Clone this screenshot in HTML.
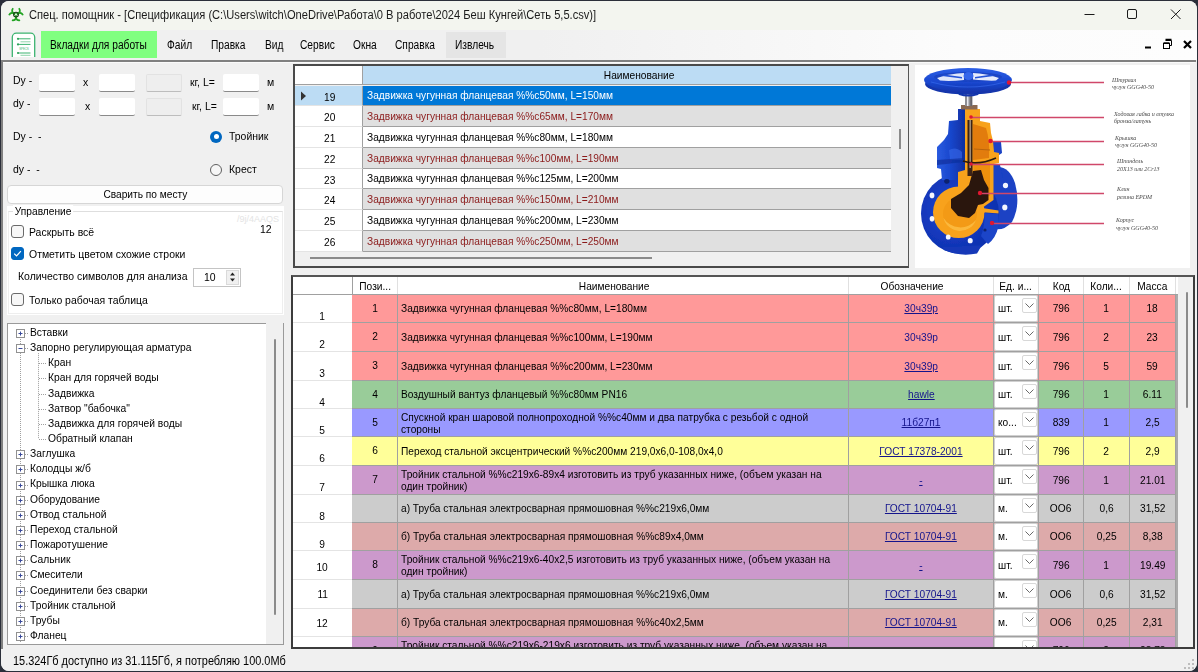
<!DOCTYPE html><html lang="ru"><head><meta charset="utf-8"><title>Спец. помощник</title><style>
*{box-sizing:border-box;margin:0;padding:0}
html,body{width:1198px;height:672px;overflow:hidden;background:#2b2f3a}
body{font-family:"Liberation Sans",sans-serif;font-size:11px;color:#000;position:relative}
.a{position:absolute;white-space:nowrap}
#win{left:1px;top:1px;width:1196px;height:670px;background:#f0f0f0;border-radius:8px;overflow:hidden}
#title{left:0;top:0;width:1196px;height:29px;background:#f3f5ef}
#title .t{left:28px;top:7px;font-size:12px;color:#1b1b1b;transform:scaleX(.927);transform-origin:0 50%}
#menu{left:0;top:29px;width:1196px;height:30px;background:linear-gradient(90deg,#f0f0f0 0%,#f0f0f0 45%,#fcfcfc 80%,#fdfdfd 100%)}
.mi{top:7.5px;font-size:12px;color:#000;transform:scaleX(.85);transform-origin:0 50%}
.lbl{font-size:11px;color:#000;transform:scaleX(.925);transform-origin:0 50%}
.lp{transform:scaleX(.95)}
.tr{transform:scaleX(.935)}
.c{display:inline-block;transform:scaleX(.925);transform-origin:50% 50%;white-space:nowrap}
.l{display:inline-block;transform:scaleX(.925);transform-origin:0 50%;white-space:nowrap}
.inp{background:#fff;border-bottom:1px solid #8a8a8a;border-radius:2px;height:18px;width:36px}
.inp.d{background:#eeeeee;border:1px solid #e2e2e2;border-bottom:1px solid #bdbdbd}
.tree{font-size:11px}
.cb{width:13px;height:13px;border:1px solid #6a6a6a;border-radius:3px;background:#f7f7f7}
.row{left:0;height:21px}
</style></head><body><div id="win" class="a"><div id="title" class="a"><div class="a t">Спец. помощник - [Спецификация (C:\Users\witch\OneDrive\Работа\0 В работе\2024 Беш Кунгей\Сеть 5,5.csv)]</div><svg class="a" style="left:6px;top:5px" width="18" height="17" viewBox="0 0 18 17"><g fill="none" stroke="#22a322" stroke-width="1.700"><path d="M6.17 2.22A3.7 3.7 0 1 0 11.83 2.22"/><path d="M15.94 9.33A3.7 3.7 0 1 0 13.11 14.24"/><path d="M4.89 14.24A3.7 3.7 0 1 0 2.06 9.33"/></g><circle cx="9.0" cy="8.6" r="2.400" fill="none" stroke="#173d17" stroke-width="1.100"/><circle cx="9.0" cy="8.6" r="1" fill="#f3f5ef"/></svg><svg class="a" style="left:1080px;top:0" width="116" height="29" viewBox="0 0 116 29"><g stroke="#1a1a1a" stroke-width="1" fill="none"><path d="M3.500 13.500h10"/><rect x="46.500" y="8.500" width="9" height="9" rx="1.500"/><path d="M90 8.500l9.500 9.500M99.500 8.500l-9.500 9.500"/></g></svg></div><div id="menu" class="a"><div class="a" style="left:40px;top:1px;width:116px;height:27px;background:#80ff80"></div><svg class="a" style="left:10px;top:2px" width="25" height="25" viewBox="0 0 25 25"><rect x="1.300" y="1.200" width="22.400" height="28" rx="4" fill="#fff" stroke="#3cb371" stroke-width="1.300"/><g stroke="#3cb371" stroke-width="1"><path d="M7 6.800h12.500M7 12.400h12.500M7 21h12.500"/></g><g stroke="#8fd4aa" stroke-width="1"><path d="M9.500 9.800h10M9.500 23.300h10"/></g><g fill="#2ea35a"><circle cx="7" cy="6.800" r="1.100"/><circle cx="7" cy="12.400" r="1.100"/><circle cx="7" cy="21" r="1.100"/></g><text x="8" y="18.300" font-size="3.600" fill="#5fc48a" font-family="Liberation Sans,sans-serif" textLength="10">SPECS</text></svg><div class="a mi" style="left:49px">Вкладки для работы</div><div class="a mi" style="left:166px">Файл</div><div class="a mi" style="left:210px">Правка</div><div class="a mi" style="left:264px">Вид</div><div class="a mi" style="left:299px">Сервис</div><div class="a mi" style="left:352px">Окна</div><div class="a mi" style="left:394px">Справка</div><div class="a" style="left:445px;top:2px;width:60px;height:26px;background:#e5e5e5"></div><div class="a mi" style="left:454px">Извлечь</div><svg class="a" style="left:1138px;top:6px" width="56" height="18" viewBox="0 0 56 18"><g stroke="#000" stroke-width="2" fill="none"><path d="M6 11.500h6"/><path d="M45 5l7 7M52 5l-7 7" stroke-width="2.2"/></g><g stroke="#000" stroke-width="1" fill="none"><path d="M26.500 4.500h6v5h-2" /><path d="M26.500 3.500h6" stroke-width="1.500"/><rect x="24.500" y="7.500" width="6" height="5"/><path d="M24.500 7h6" stroke-width="1.500"/></g></svg></div><div class="a" style="left:0;top:59px;width:1194.5px;height:1.5px;background:#808080"></div><div class="a" style="left:2px;top:60.5px;width:1192px;height:1px;background:#fafafa"></div><div class="a" style="left:0;top:59px;width:1.7px;height:589px;background:#808080"></div><div class="a lbl lp" style="left:12px;top:73px;">Dy -</div><div class="a inp" style="left:38px;top:72.7px"></div><div class="a lbl lp" style="left:82px;top:75px;">x</div><div class="a inp" style="left:98px;top:72.7px"></div><div class="a inp d" style="left:145px;top:72.7px"></div><div class="a lbl lp" style="left:189px;top:75px;">кг, L=</div><div class="a inp" style="left:222px;top:72.7px"></div><div class="a lbl lp" style="left:266px;top:75px;">м</div><div class="a lbl lp" style="left:12px;top:96px;">dy -</div><div class="a inp" style="left:38px;top:96.5px"></div><div class="a lbl lp" style="left:84px;top:99px;">x</div><div class="a inp" style="left:98px;top:96.5px"></div><div class="a inp d" style="left:145px;top:96.5px"></div><div class="a lbl lp" style="left:191px;top:99px;">кг, L=</div><div class="a inp" style="left:222px;top:96.5px"></div><div class="a lbl lp" style="left:266px;top:99px;">м</div><div class="a lbl lp" style="left:12px;top:129px;">Dy -&nbsp; -</div><div class="a lbl lp" style="left:12px;top:162px;">dy -&nbsp; -</div><div class="a" style="left:209px;top:129.5px;width:12px;height:12px;border-radius:50%;background:#0067c0"></div><div class="a" style="left:212.5px;top:133px;width:5px;height:5px;border-radius:50%;background:#fff"></div><div class="a lbl lp" style="left:228px;top:129px;">Тройник</div><div class="a" style="left:209px;top:162.5px;width:12px;height:12px;border-radius:50%;border:1px solid #5f5f5f;background:#f6f6f6"></div><div class="a lbl lp" style="left:228px;top:162px;">Крест</div><div class="a" style="left:6px;top:184px;width:276px;height:19px;background:#fdfdfd;border:1px solid #d6d6d6;border-radius:4px;text-align:center;line-height:17px;font-size:11px"><span class="c">Сварить по месту</span></div><div class="a" style="left:6px;top:205px;width:277px;height:109px;background:#fff"></div><div class="a" style="left:7px;top:210px;width:275px;height:103px;border:1px solid #eeeeee;border-top-color:#dedede"></div><div class="a lbl" style="left:12px;top:204px;background:#fff;padding:0 2px">Управление</div><div class="a" style="left:236px;top:213px;font-size:9px;color:#e4e4e4">/9j/4AAQS</div><div class="a lbl lp" style="left:259px;top:222px;">12</div><div class="a cb" style="left:10px;top:224px"></div><div class="a lbl lp" style="left:28px;top:225px;">Раскрыть всё</div><div class="a cb" style="left:10px;top:246px;background:#0067c0;border-color:#0067c0"></div><svg class="a" style="left:10px;top:246px" width="13" height="13" viewBox="0 0 13 13"><path d="M3.2 6.700l2.300 2.300 4.400-4.800" fill="none" stroke="#fff" stroke-width="1.2"/></svg><div class="a lbl lp" style="left:28px;top:247px;">Отметить цветом схожие строки</div><div class="a lbl lp" style="left:17px;top:269px;">Количество символов для анализа</div><div class="a" style="left:192px;top:267px;width:48px;height:19px;background:#fff;border:1px solid #c4c4c4"></div><div class="a lbl lp" style="left:203px;top:270px;">10</div><div class="a" style="left:225px;top:269px;width:13px;height:15px;background:#f0f0f0;border:1px solid #dadada"></div><svg class="a" style="left:225px;top:268px" width="13" height="16" viewBox="0 0 13 16"><path d="M4 6.500l2.500-3 2.500 3zM4 9.500l2.500 3 2.500-3z" fill="#222"/></svg><div class="a cb" style="left:10px;top:292px"></div><div class="a lbl lp" style="left:28px;top:293px;">Только рабочая таблица</div><div class="a" style="left:6px;top:322px;width:277px;height:322px;background:#fff;border:1px solid #9a9a9a"></div><div class="a" style="left:265px;top:322px;width:17px;height:321px;background:#f0f0f0"></div><div class="a" style="left:273px;top:338px;width:2px;height:276px;background:#8b8b8b;border-radius:1px"></div><div class="a lbl tr" style="left:29px;top:325px;">Вставки</div><div class="a lbl tr" style="left:29px;top:340px;">Запорно регулирующая арматура</div><div class="a lbl tr" style="left:47px;top:355px;">Кран</div><div class="a lbl tr" style="left:47px;top:370px;">Кран для горячей воды</div><div class="a lbl tr" style="left:47px;top:386px;">Задвижка</div><div class="a lbl tr" style="left:47px;top:401px;">Затвор "бабочка"</div><div class="a lbl tr" style="left:47px;top:416px;">Задвижка для горячей воды</div><div class="a lbl tr" style="left:47px;top:431px;">Обратный клапан</div><div class="a lbl tr" style="left:29px;top:446px;">Заглушка</div><div class="a lbl tr" style="left:29px;top:461px;">Колодцы ж/б</div><div class="a lbl tr" style="left:29px;top:476px;">Крышка люка</div><div class="a lbl tr" style="left:29px;top:492px;">Оборудование</div><div class="a lbl tr" style="left:29px;top:507px;">Отвод стальной</div><div class="a lbl tr" style="left:29px;top:522px;">Переход стальной</div><div class="a lbl tr" style="left:29px;top:537px;">Пожаротушение</div><div class="a lbl tr" style="left:29px;top:552px;">Сальник</div><div class="a lbl tr" style="left:29px;top:567px;">Смесители</div><div class="a lbl tr" style="left:29px;top:583px;">Соединители без сварки</div><div class="a lbl tr" style="left:29px;top:598px;">Тройник стальной</div><div class="a lbl tr" style="left:29px;top:613px;">Трубы</div><div class="a lbl tr" style="left:29px;top:628px;">Фланец</div><svg class="a" style="left:0;top:0" width="290" height="650" viewBox="0 0 290 650"><path d="M19.500 332.0V642" stroke="#a0a0a0" stroke-width="1" stroke-dasharray="1 1" fill="none"/><path d="M37.500 352.15V438.05" stroke="#a0a0a0" stroke-width="1" stroke-dasharray="1 1" fill="none"/><path d="M24 332.5H28" stroke="#a0a0a0" stroke-dasharray="1 1"/><rect x="15.500" y="328.5" width="8" height="8" fill="#fff" stroke="#919191"/><path d="M17.500 332.5h4" stroke="#3a4a9a"/><path d="M19.500 330.5v4" stroke="#3a4a9a"/><path d="M24 347.5H28" stroke="#a0a0a0" stroke-dasharray="1 1"/><rect x="15.500" y="343.5" width="8" height="8" fill="#fff" stroke="#919191"/><path d="M17.500 347.5h4" stroke="#3a4a9a"/><path d="M38 362.5H46" stroke="#a0a0a0" stroke-dasharray="1 1"/><path d="M38 377.5H46" stroke="#a0a0a0" stroke-dasharray="1 1"/><path d="M38 393.5H46" stroke="#a0a0a0" stroke-dasharray="1 1"/><path d="M38 408.5H46" stroke="#a0a0a0" stroke-dasharray="1 1"/><path d="M38 423.5H46" stroke="#a0a0a0" stroke-dasharray="1 1"/><path d="M38 438.5H46" stroke="#a0a0a0" stroke-dasharray="1 1"/><path d="M24 453.5H28" stroke="#a0a0a0" stroke-dasharray="1 1"/><rect x="15.500" y="449.5" width="8" height="8" fill="#fff" stroke="#919191"/><path d="M17.500 453.5h4" stroke="#3a4a9a"/><path d="M19.500 451.5v4" stroke="#3a4a9a"/><path d="M24 468.5H28" stroke="#a0a0a0" stroke-dasharray="1 1"/><rect x="15.500" y="464.5" width="8" height="8" fill="#fff" stroke="#919191"/><path d="M17.500 468.5h4" stroke="#3a4a9a"/><path d="M19.500 466.5v4" stroke="#3a4a9a"/><path d="M24 484.5H28" stroke="#a0a0a0" stroke-dasharray="1 1"/><rect x="15.500" y="480.5" width="8" height="8" fill="#fff" stroke="#919191"/><path d="M17.500 484.5h4" stroke="#3a4a9a"/><path d="M19.500 482.5v4" stroke="#3a4a9a"/><path d="M24 499.5H28" stroke="#a0a0a0" stroke-dasharray="1 1"/><rect x="15.500" y="495.5" width="8" height="8" fill="#fff" stroke="#919191"/><path d="M17.500 499.5h4" stroke="#3a4a9a"/><path d="M19.500 497.5v4" stroke="#3a4a9a"/><path d="M24 514.5H28" stroke="#a0a0a0" stroke-dasharray="1 1"/><rect x="15.500" y="510.5" width="8" height="8" fill="#fff" stroke="#919191"/><path d="M17.500 514.5h4" stroke="#3a4a9a"/><path d="M19.500 512.5v4" stroke="#3a4a9a"/><path d="M24 529.5H28" stroke="#a0a0a0" stroke-dasharray="1 1"/><rect x="15.500" y="525.5" width="8" height="8" fill="#fff" stroke="#919191"/><path d="M17.500 529.5h4" stroke="#3a4a9a"/><path d="M19.500 527.5v4" stroke="#3a4a9a"/><path d="M24 544.5H28" stroke="#a0a0a0" stroke-dasharray="1 1"/><rect x="15.500" y="540.5" width="8" height="8" fill="#fff" stroke="#919191"/><path d="M17.500 544.5h4" stroke="#3a4a9a"/><path d="M19.500 542.5v4" stroke="#3a4a9a"/><path d="M24 559.5H28" stroke="#a0a0a0" stroke-dasharray="1 1"/><rect x="15.500" y="555.5" width="8" height="8" fill="#fff" stroke="#919191"/><path d="M17.500 559.5h4" stroke="#3a4a9a"/><path d="M19.500 557.5v4" stroke="#3a4a9a"/><path d="M24 574.5H28" stroke="#a0a0a0" stroke-dasharray="1 1"/><rect x="15.500" y="570.5" width="8" height="8" fill="#fff" stroke="#919191"/><path d="M17.500 574.5h4" stroke="#3a4a9a"/><path d="M19.500 572.5v4" stroke="#3a4a9a"/><path d="M24 590.5H28" stroke="#a0a0a0" stroke-dasharray="1 1"/><rect x="15.500" y="586.5" width="8" height="8" fill="#fff" stroke="#919191"/><path d="M17.500 590.5h4" stroke="#3a4a9a"/><path d="M19.500 588.5v4" stroke="#3a4a9a"/><path d="M24 605.5H28" stroke="#a0a0a0" stroke-dasharray="1 1"/><rect x="15.500" y="601.5" width="8" height="8" fill="#fff" stroke="#919191"/><path d="M17.500 605.5h4" stroke="#3a4a9a"/><path d="M19.500 603.5v4" stroke="#3a4a9a"/><path d="M24 620.5H28" stroke="#a0a0a0" stroke-dasharray="1 1"/><rect x="15.500" y="616.5" width="8" height="8" fill="#fff" stroke="#919191"/><path d="M17.500 620.5h4" stroke="#3a4a9a"/><path d="M19.500 618.5v4" stroke="#3a4a9a"/><path d="M24 635.5H28" stroke="#a0a0a0" stroke-dasharray="1 1"/><rect x="15.500" y="631.5" width="8" height="8" fill="#fff" stroke="#919191"/><path d="M17.500 635.5h4" stroke="#3a4a9a"/><path d="M19.500 633.5v4" stroke="#3a4a9a"/></svg><div class="a" style="left:0;top:650px;width:1196px;height:20px;background:#f0f0f0"></div><div class="a" style="left:12px;top:653px;font-size:12px;transform:scaleX(.91);transform-origin:0 50%">15.324Гб доступно из 31.115Гб, я потребляю 100.0Мб</div><svg class="a" style="left:1182px;top:657px" width="13" height="13" viewBox="0 0 13 13"><g fill="#bdbdbd"><rect x="9" y="1" width="2" height="2"/><rect x="5" y="5" width="2" height="2"/><rect x="9" y="5" width="2" height="2"/><rect x="1" y="9" width="2" height="2"/><rect x="5" y="9" width="2" height="2"/><rect x="9" y="9" width="2" height="2"/></g></svg><div class="a" style="left:292px;top:63px;width:616px;height:204px;background:#f0f0f0;border:2px solid #4a4a4a;border-right:1.5px solid #555"></div><div class="a" style="left:294px;top:65px;width:68px;height:19px;background:#fff;border-right:1px solid #a0a0a0;border-bottom:1px solid #a0a0a0"></div><div class="a" style="left:362px;top:65px;width:528px;height:19px;background:#bcdcf4;border-bottom:1px solid #a0a0a0;text-align:center;line-height:18px;padding-left:24px"><span class="c">Наименование</span></div><div class="a" style="left:294px;top:85px;width:68px;height:20px;background:#bcdcf4;border-bottom:1px solid #e4e4e4;border-right:1px solid #a0a0a0"></div><div class="a lbl " style="left:323px;top:90px;">19</div><div class="a" style="left:362px;top:85px;width:528px;height:20px;background:#0078d7;color:#fff;border-bottom:1px solid #a0a0a0;padding-left:4px;line-height:19px"><span class="l">Задвижка чугунная фланцевая %%c50мм, L=150мм</span></div><div class="a" style="left:294px;top:105px;width:68px;height:21px;background:#fff;border-bottom:1px solid #e4e4e4;border-right:1px solid #a0a0a0"></div><div class="a lbl " style="left:323px;top:110px;">20</div><div class="a" style="left:362px;top:105px;width:528px;height:21px;background:#e0e0e0;color:#8b1a1a;border-bottom:1px solid #a0a0a0;padding-left:4px;line-height:20px"><span class="l">Задвижка чугунная фланцевая %%c65мм, L=170мм</span></div><div class="a" style="left:294px;top:126px;width:68px;height:21px;background:#fff;border-bottom:1px solid #e4e4e4;border-right:1px solid #a0a0a0"></div><div class="a lbl " style="left:323px;top:131px;">21</div><div class="a" style="left:362px;top:126px;width:528px;height:21px;background:#fff;color:#000;border-bottom:1px solid #a0a0a0;padding-left:4px;line-height:20px"><span class="l">Задвижка чугунная фланцевая %%c80мм, L=180мм</span></div><div class="a" style="left:294px;top:147px;width:68px;height:21px;background:#fff;border-bottom:1px solid #e4e4e4;border-right:1px solid #a0a0a0"></div><div class="a lbl " style="left:323px;top:152px;">22</div><div class="a" style="left:362px;top:147px;width:528px;height:21px;background:#e0e0e0;color:#8b1a1a;border-bottom:1px solid #a0a0a0;padding-left:4px;line-height:20px"><span class="l">Задвижка чугунная фланцевая %%c100мм, L=190мм</span></div><div class="a" style="left:294px;top:168px;width:68px;height:20px;background:#fff;border-bottom:1px solid #e4e4e4;border-right:1px solid #a0a0a0"></div><div class="a lbl " style="left:323px;top:173px;">23</div><div class="a" style="left:362px;top:168px;width:528px;height:20px;background:#fff;color:#000;border-bottom:1px solid #a0a0a0;padding-left:4px;line-height:19px"><span class="l">Задвижка чугунная фланцевая %%c125мм, L=200мм</span></div><div class="a" style="left:294px;top:188px;width:68px;height:21px;background:#fff;border-bottom:1px solid #e4e4e4;border-right:1px solid #a0a0a0"></div><div class="a lbl " style="left:323px;top:193px;">24</div><div class="a" style="left:362px;top:188px;width:528px;height:21px;background:#e0e0e0;color:#8b1a1a;border-bottom:1px solid #a0a0a0;padding-left:4px;line-height:20px"><span class="l">Задвижка чугунная фланцевая %%c150мм, L=210мм</span></div><div class="a" style="left:294px;top:209px;width:68px;height:21px;background:#fff;border-bottom:1px solid #e4e4e4;border-right:1px solid #a0a0a0"></div><div class="a lbl " style="left:323px;top:214px;">25</div><div class="a" style="left:362px;top:209px;width:528px;height:21px;background:#fff;color:#000;border-bottom:1px solid #a0a0a0;padding-left:4px;line-height:20px"><span class="l">Задвижка чугунная фланцевая %%c200мм, L=230мм</span></div><div class="a" style="left:294px;top:230px;width:68px;height:21px;background:#fff;border-bottom:1px solid #e4e4e4;border-right:1px solid #a0a0a0"></div><div class="a lbl " style="left:323px;top:235px;">26</div><div class="a" style="left:362px;top:230px;width:528px;height:21px;background:#e0e0e0;color:#8b1a1a;border-bottom:1px solid #a0a0a0;padding-left:4px;line-height:20px"><span class="l">Задвижка чугунная фланцевая %%c250мм, L=250мм</span></div><svg class="a" style="left:299px;top:90px" width="8" height="10" viewBox="0 0 8 10"><path d="M1 0.500l5 4.500-5 4.500z" fill="#333"/></svg><div class="a" style="left:898px;top:128px;width:2px;height:20px;background:#8b8b8b"></div><div class="a" style="left:309px;top:256px;width:342px;height:2px;background:#8b8b8b"></div><div class="a" style="left:913.5px;top:63.5px;width:275.5px;height:203px;background:#fff"></div><svg class="a" style="left:-1px;top:-1px" width="1198" height="672" viewBox="0 0 1198 672">
<defs>
<linearGradient id="bl" x1="0" y1="0" x2="1" y2="0"><stop offset="0" stop-color="#2a5be0"/><stop offset="0.5" stop-color="#1846cc"/><stop offset="1" stop-color="#0f2fa0"/></linearGradient>
<radialGradient id="fl" cx="0.4" cy="0.45" r="0.6"><stop offset="0" stop-color="#1a46d2"/><stop offset="1" stop-color="#0e2fae"/></radialGradient>
<linearGradient id="wh" x1="0" y1="0" x2="0" y2="1"><stop offset="0" stop-color="#2c5fe6"/><stop offset="0.6" stop-color="#1a47cf"/><stop offset="1" stop-color="#1235ac"/></linearGradient>
<filter id="bz" x="-5%" y="-5%" width="110%" height="110%"><feGaussianBlur stdDeviation="0.45"/></filter>
</defs>
<g filter="url(#bz)">
<!-- right (rear) flange -->
<path d="M992 168 Q1008 163 1015 183 Q1021 205 1012 222 Q1004 231 994 229 Z" fill="#1a43c4"/>
<ellipse cx="1005.500" cy="185.500" rx="2.600" ry="2.800" fill="#f4f6ff"/>
<ellipse cx="1004.800" cy="207.400" rx="2.600" ry="2.800" fill="#f4f6ff"/>
<!-- front flange -->
<ellipse cx="960" cy="213.500" rx="39" ry="40" fill="url(#fl)"/>
<path d="M942 247 L944 250 Q960 257 977 253.500 L982 245 Z" fill="#1238b8"/>
<!-- bonnet blue (left half) -->
<path d="M965 109 L958 109 L958 120 L949 121 L948 134 L944 140 L937 147 L937 168 L941 169 L942 180 L965 180 Z" fill="url(#bl)"/>
<path d="M949 150 Q956 146 962 152 L962 160 L950 160 Z" fill="#3464e4" opacity=".7"/>
<path d="M937 160 L964 158 L964 162 L937 165 Z" fill="#0f2f9c" opacity=".7"/>
<!-- right bonnet bolt lug -->
<path d="M993 142 L1001 142 L1002 153 L999 155 L993 153 Z" fill="#1a43c4"/>
<path d="M993 165 L1000 165 L1003 178 L993 178 Z" fill="#1a43c4"/>
<!-- orange ring -->
<circle cx="958.800" cy="212.300" r="25.800" fill="#f8a21c"/>
<!-- orange cut section bonnet + neck -->
<path d="M965 109 L980 109 L980 121 L990 123 L991 133 L993 141 L994 152 L999 153 L999 163 L993.500 164 L993.500 200 L982 208 L998.500 210.500 L998.500 213.500 L980 212 L958 190 L958 172 L965 170 Z" fill="#f8a21c"/>
<!-- blue block lower right -->
<path d="M984.500 213 L998.500 214 L998.500 226 Q996 238 988 244 Q984 240 981 236 Q985 226 984.500 213 Z" fill="#1b45c8"/>
<!-- inner darker orange dome -->
<path d="M973 124 L986 128 Q990 140 989 158 L973 160 Z" fill="#e27c0a"/>
<path d="M973 162 L990 160 L990 196 L976 196 Z" fill="#ee9010"/>
<!-- inner bore -->
<circle cx="960" cy="214" r="17" fill="#f39a16"/>
<path d="M943.500 218 A17 17 0 0 0 976 220 A20 20 0 0 1 943.500 218 Z" fill="#fbb83c"/>
<!-- black wedge -->
<path d="M973 171 L981 170 L984 180 L988.500 188 L988.500 200 L983 204 L978 205 L975 213 L969 218 L958 216 L951 208 L951 199 L961 193 L969 185 Z" fill="#2a1610"/>
<!-- stem -->
<rect x="967.500" y="120" width="5" height="56" fill="#3a2214"/>
<rect x="969.500" y="120" width="1.300" height="48" fill="#b9a58c"/>
<path d="M963 161 Q978 166 996 158" stroke="#2a1a10" stroke-width="1.600" fill="none"/>
<path d="M974 149 L990 150" stroke="#b86408" stroke-width="1" fill="none"/>
<!-- nut and stem top -->
<rect x="961" y="105" width="16.500" height="4.500" fill="#8a6a52"/>
<rect x="965" y="94" width="7.500" height="12" fill="#8e8e94"/>
<rect x="967" y="94" width="1.500" height="12" fill="#e8e8ee"/>
<rect x="970.500" y="94" width="1.200" height="12" fill="#55555c"/>
<!-- flange bolt holes -->
<g fill="#f4f6ff"><ellipse cx="932" cy="195.400" rx="2.400" ry="2.800"/><ellipse cx="932" cy="218.700" rx="2.300" ry="2.800"/><ellipse cx="948.200" cy="237" rx="2.400" ry="2.600"/><ellipse cx="970.200" cy="240.700" rx="2.500" ry="2.600"/></g>
<ellipse cx="946.800" cy="181.300" rx="2.600" ry="2.400" fill="#0a2070"/>
<ellipse cx="985" cy="230" rx="1.600" ry="1.600" fill="#0a2070"/>
<!-- handwheel -->
<ellipse cx="968" cy="84" rx="43" ry="10.500" fill="#1235ac"/>
<ellipse cx="968" cy="80" rx="44" ry="12" fill="url(#wh)"/>
<ellipse cx="968" cy="77" rx="34" ry="5" fill="#1a44c4"/>
<path d="M937 78 Q950 73.500 964 73 L964 80 Q950 81.500 940 80.500 Z" fill="#dfe7fb"/>
<path d="M999 78 Q986 73.500 973 73 L973 79.500 Q988 81 996 80.500 Z" fill="#e6ecfc"/>
<path d="M944 74.500 L962 77 L962 78.500 L942 76 Z M992 74.500 L975 77 L975 78.500 L994 76 Z" fill="#2452d8"/>
<ellipse cx="968.500" cy="76" rx="5" ry="4" fill="#3566ea"/>
<path d="M931 82 Q968 92 1005 82" stroke="#3a6cf0" stroke-width="1.200" fill="none" opacity=".6"/>
<path d="M957 92 Q968 97 980 92 L978 95 Q968 98 959 95 Z" fill="#1235ac"/>
</g>
<!-- callout lines -->
<g stroke="#d0476a" stroke-width="1.500" fill="none" filter="url(#bz)">
<path d="M1010 82.500H1104"/><path d="M972 117.500H1104"/><path d="M990 141.500H1104"/><path d="M972 164.500H1104"/><path d="M982 193.500H1104"/><path d="M994 223.500H1104"/>
</g>
<g fill="#e01830" filter="url(#bz)"><circle cx="1009" cy="82.500" r="2.200"/><circle cx="971" cy="117" r="1.800"/><circle cx="990.500" cy="141" r="2.200"/><circle cx="971" cy="164" r="1.800"/><circle cx="980" cy="193" r="2.200"/><circle cx="992" cy="223" r="2.200"/></g>
<g font-family="Liberation Serif,serif" font-style="italic" font-size="6" fill="#484848" filter="url(#bz)">
<text x="1112" y="82">Штурвал</text><text x="1112" y="89">чугун GGG40-50</text>
<text x="1114" y="116">Ходовая гайка и втулка</text><text x="1114" y="123">бронза/латунь</text>
<text x="1115" y="140">Крышка</text><text x="1115" y="147">чугун GGG40-50</text>
<text x="1117" y="163">Шпиндель</text><text x="1117" y="170.500">20X13 или 2Cr13</text>
<text x="1117" y="191">Клин</text><text x="1117" y="198.500">резина EPDM</text>
<text x="1116" y="222">Корпус</text><text x="1116" y="229.500">чугун GGG40-50</text>
</g>
</svg>
<div class="a" style="left:290px;top:274px;width:904px;height:374px;background:#fff;border:2px solid #3c3c3c;border-top-color:#555"></div><div class="a" style="left:292px;top:276px;width:886px;height:18px;background:#fff;border-bottom:1px solid #a0a0a0"></div><div class="a" style="left:292px;top:276px;width:60px;height:17px;border-right:1px solid #e0e0e0;text-align:center;line-height:18px;"><span class="c"></span></div><div class="a" style="left:352px;top:276px;width:45px;height:17px;border-right:1px solid #e0e0e0;text-align:center;line-height:18px;"><span class="c">Пози...</span></div><div class="a" style="left:397px;top:276px;width:451px;height:17px;border-right:1px solid #e0e0e0;text-align:center;line-height:18px;padding-right:17px;"><span class="c">Наименование</span></div><div class="a" style="left:848px;top:276px;width:145px;height:17px;border-right:1px solid #e0e0e0;text-align:center;line-height:18px;padding-right:17px;"><span class="c">Обозначение</span></div><div class="a" style="left:993px;top:276px;width:45px;height:17px;border-right:1px solid #e0e0e0;text-align:center;line-height:18px;"><span class="c">Ед. и...</span></div><div class="a" style="left:1038px;top:276px;width:45px;height:17px;border-right:1px solid #e0e0e0;text-align:center;line-height:18px;"><span class="c">Код</span></div><div class="a" style="left:1083px;top:276px;width:46px;height:17px;border-right:1px solid #e0e0e0;text-align:center;line-height:18px;"><span class="c">Коли...</span></div><div class="a" style="left:1129px;top:276px;width:46px;height:17px;border-right:1px solid #e0e0e0;text-align:center;line-height:18px;"><span class="c">Масса</span></div><div class="a" style="left:351px;top:276px;width:1px;height:370px;background:#a0a0a0"></div><div class="a" style="left:292px;top:294px;width:886px;height:352px;overflow:hidden;background:#ababab"><div class="a" style="left:0;top:0px;width:883px;height:28px;background:#ff9999;border-bottom:1px solid #a0a0a0"></div><div class="a" style="left:0;top:0px;width:59px;height:28px;background:#fff;border-bottom:1px solid #e4e4e4"></div><div class="a" style="left:0;top:15px;width:59px;text-align:center"><span class="c">1</span></div><div class="a" style="left:60px;top:0px;width:44px;height:28px;text-align:center;line-height:26px"><span class="c">1</span></div><div class="a l" style="left:108px;top:0px;line-height:27px">Задвижка чугунная фланцевая %%c80мм, L=180мм</div><div class="a" style="left:556px;top:0px;width:144px;height:28px;text-align:center;line-height:27px;color:#14148c;"><span class="c" style="text-decoration:underline;">30ч39р</span></div><div class="a" style="left:701px;top:0px;width:44px;height:27px;background:#fff;border:1px solid #d0d0d0;border-radius:2px"></div><div class="a l" style="left:705px;top:0px;line-height:27px">шт.</div><div class="a" style="left:729px;top:3px;width:15px;height:15px;border:1px solid #d8d8d8;border-radius:2px;background:#fff"></div><svg class="a" style="left:732px;top:8px" width="9" height="6" viewBox="0 0 9 6"><path d="M0.500 0.500l4 4 4-4" fill="none" stroke="#6a6a6a"/></svg><div class="a" style="left:746px;top:0px;width:44px;height:28px;text-align:center;line-height:27px"><span class="c">796</span></div><div class="a" style="left:791px;top:0px;width:45px;height:28px;text-align:center;line-height:27px"><span class="c">1</span></div><div class="a" style="left:837px;top:0px;width:45px;height:28px;text-align:center;line-height:27px"><span class="c">18</span></div><div class="a" style="left:0;top:28px;width:883px;height:29px;background:#ff9999;border-bottom:1px solid #a0a0a0"></div><div class="a" style="left:0;top:28px;width:59px;height:29px;background:#fff;border-bottom:1px solid #e4e4e4"></div><div class="a" style="left:0;top:43px;width:59px;text-align:center"><span class="c">2</span></div><div class="a" style="left:60px;top:28px;width:44px;height:29px;text-align:center;line-height:27px"><span class="c">2</span></div><div class="a l" style="left:108px;top:28px;line-height:28px">Задвижка чугунная фланцевая %%c100мм, L=190мм</div><div class="a" style="left:556px;top:28px;width:144px;height:29px;text-align:center;line-height:28px;color:#14148c;"><span class="c" style="">30ч39р</span></div><div class="a" style="left:701px;top:28px;width:44px;height:28px;background:#fff;border:1px solid #d0d0d0;border-radius:2px"></div><div class="a l" style="left:705px;top:28px;line-height:28px">шт.</div><div class="a" style="left:729px;top:31px;width:15px;height:15px;border:1px solid #d8d8d8;border-radius:2px;background:#fff"></div><svg class="a" style="left:732px;top:36px" width="9" height="6" viewBox="0 0 9 6"><path d="M0.500 0.500l4 4 4-4" fill="none" stroke="#6a6a6a"/></svg><div class="a" style="left:746px;top:28px;width:44px;height:29px;text-align:center;line-height:28px"><span class="c">796</span></div><div class="a" style="left:791px;top:28px;width:45px;height:29px;text-align:center;line-height:28px"><span class="c">2</span></div><div class="a" style="left:837px;top:28px;width:45px;height:29px;text-align:center;line-height:28px"><span class="c">23</span></div><div class="a" style="left:0;top:57px;width:883px;height:29px;background:#ff9999;border-bottom:1px solid #a0a0a0"></div><div class="a" style="left:0;top:57px;width:59px;height:29px;background:#fff;border-bottom:1px solid #e4e4e4"></div><div class="a" style="left:0;top:72px;width:59px;text-align:center"><span class="c">3</span></div><div class="a" style="left:60px;top:57px;width:44px;height:29px;text-align:center;line-height:27px"><span class="c">3</span></div><div class="a l" style="left:108px;top:57px;line-height:28px">Задвижка чугунная фланцевая %%c200мм, L=230мм</div><div class="a" style="left:556px;top:57px;width:144px;height:29px;text-align:center;line-height:28px;color:#14148c;"><span class="c" style="text-decoration:underline;">30ч39р</span></div><div class="a" style="left:701px;top:57px;width:44px;height:28px;background:#fff;border:1px solid #d0d0d0;border-radius:2px"></div><div class="a l" style="left:705px;top:57px;line-height:28px">шт.</div><div class="a" style="left:729px;top:60px;width:15px;height:15px;border:1px solid #d8d8d8;border-radius:2px;background:#fff"></div><svg class="a" style="left:732px;top:65px" width="9" height="6" viewBox="0 0 9 6"><path d="M0.500 0.500l4 4 4-4" fill="none" stroke="#6a6a6a"/></svg><div class="a" style="left:746px;top:57px;width:44px;height:29px;text-align:center;line-height:28px"><span class="c">796</span></div><div class="a" style="left:791px;top:57px;width:45px;height:29px;text-align:center;line-height:28px"><span class="c">5</span></div><div class="a" style="left:837px;top:57px;width:45px;height:29px;text-align:center;line-height:28px"><span class="c">59</span></div><div class="a" style="left:0;top:86px;width:883px;height:28px;background:#99cc99;border-bottom:1px solid #a0a0a0"></div><div class="a" style="left:0;top:86px;width:59px;height:28px;background:#fff;border-bottom:1px solid #e4e4e4"></div><div class="a" style="left:0;top:101px;width:59px;text-align:center"><span class="c">4</span></div><div class="a" style="left:60px;top:86px;width:44px;height:28px;text-align:center;line-height:26px"><span class="c">4</span></div><div class="a l" style="left:108px;top:86px;line-height:27px">Воздушный вантуз фланцевый %%c80мм PN16</div><div class="a" style="left:556px;top:86px;width:144px;height:28px;text-align:center;line-height:27px;color:#14148c;"><span class="c" style="text-decoration:underline;">hawle</span></div><div class="a" style="left:701px;top:86px;width:44px;height:27px;background:#fff;border:1px solid #d0d0d0;border-radius:2px"></div><div class="a l" style="left:705px;top:86px;line-height:27px">шт.</div><div class="a" style="left:729px;top:89px;width:15px;height:15px;border:1px solid #d8d8d8;border-radius:2px;background:#fff"></div><svg class="a" style="left:732px;top:94px" width="9" height="6" viewBox="0 0 9 6"><path d="M0.500 0.500l4 4 4-4" fill="none" stroke="#6a6a6a"/></svg><div class="a" style="left:746px;top:86px;width:44px;height:28px;text-align:center;line-height:27px"><span class="c">796</span></div><div class="a" style="left:791px;top:86px;width:45px;height:28px;text-align:center;line-height:27px"><span class="c">1</span></div><div class="a" style="left:837px;top:86px;width:45px;height:28px;text-align:center;line-height:27px"><span class="c">6.11</span></div><div class="a" style="left:0;top:114px;width:883px;height:28px;background:#9999ff;border-bottom:1px solid #a0a0a0"></div><div class="a" style="left:0;top:114px;width:59px;height:28px;background:#fff;border-bottom:1px solid #e4e4e4"></div><div class="a" style="left:0;top:129px;width:59px;text-align:center"><span class="c">5</span></div><div class="a" style="left:60px;top:114px;width:44px;height:28px;text-align:center;line-height:26px"><span class="c">5</span></div><div class="a l" style="left:108px;top:116px;line-height:12px">Спускной кран шаровой полнопроходной %%c40мм и два патрубка с резьбой с одной<br>стороны</div><div class="a" style="left:556px;top:114px;width:144px;height:28px;text-align:center;line-height:27px;color:#14148c;"><span class="c" style="text-decoration:underline;">11б27п1</span></div><div class="a" style="left:701px;top:114px;width:44px;height:27px;background:#fff;border:1px solid #d0d0d0;border-radius:2px"></div><div class="a l" style="left:705px;top:114px;line-height:27px">ко...</div><div class="a" style="left:729px;top:117px;width:15px;height:15px;border:1px solid #d8d8d8;border-radius:2px;background:#fff"></div><svg class="a" style="left:732px;top:122px" width="9" height="6" viewBox="0 0 9 6"><path d="M0.500 0.500l4 4 4-4" fill="none" stroke="#6a6a6a"/></svg><div class="a" style="left:746px;top:114px;width:44px;height:28px;text-align:center;line-height:27px"><span class="c">839</span></div><div class="a" style="left:791px;top:114px;width:45px;height:28px;text-align:center;line-height:27px"><span class="c">1</span></div><div class="a" style="left:837px;top:114px;width:45px;height:28px;text-align:center;line-height:27px"><span class="c">2,5</span></div><div class="a" style="left:0;top:142px;width:883px;height:29px;background:#ffff99;border-bottom:1px solid #a0a0a0"></div><div class="a" style="left:0;top:142px;width:59px;height:29px;background:#fff;border-bottom:1px solid #e4e4e4"></div><div class="a" style="left:0;top:157px;width:59px;text-align:center"><span class="c">6</span></div><div class="a" style="left:60px;top:142px;width:44px;height:29px;text-align:center;line-height:27px"><span class="c">6</span></div><div class="a l" style="left:108px;top:142px;line-height:28px">Переход стальной эксцентрический %%c200мм 219,0х6,0-108,0х4,0</div><div class="a" style="left:556px;top:142px;width:144px;height:29px;text-align:center;line-height:28px;color:#14148c;"><span class="c" style="text-decoration:underline;">ГОСТ 17378-2001</span></div><div class="a" style="left:701px;top:142px;width:44px;height:28px;background:#fff;border:1px solid #d0d0d0;border-radius:2px"></div><div class="a l" style="left:705px;top:142px;line-height:28px">шт.</div><div class="a" style="left:729px;top:145px;width:15px;height:15px;border:1px solid #d8d8d8;border-radius:2px;background:#fff"></div><svg class="a" style="left:732px;top:150px" width="9" height="6" viewBox="0 0 9 6"><path d="M0.500 0.500l4 4 4-4" fill="none" stroke="#6a6a6a"/></svg><div class="a" style="left:746px;top:142px;width:44px;height:29px;text-align:center;line-height:28px"><span class="c">796</span></div><div class="a" style="left:791px;top:142px;width:45px;height:29px;text-align:center;line-height:28px"><span class="c">2</span></div><div class="a" style="left:837px;top:142px;width:45px;height:29px;text-align:center;line-height:28px"><span class="c">2,9</span></div><div class="a" style="left:0;top:171px;width:883px;height:29px;background:#cc99cc;border-bottom:1px solid #a0a0a0"></div><div class="a" style="left:0;top:171px;width:59px;height:29px;background:#fff;border-bottom:1px solid #e4e4e4"></div><div class="a" style="left:0;top:186px;width:59px;text-align:center"><span class="c">7</span></div><div class="a" style="left:60px;top:171px;width:44px;height:29px;text-align:center;line-height:27px"><span class="c">7</span></div><div class="a l" style="left:108px;top:173px;line-height:12px">Тройник стальной %%c219х6-89х4 изготовить из труб указанных ниже, (объем указан на<br>один тройник)</div><div class="a" style="left:556px;top:171px;width:144px;height:29px;text-align:center;line-height:28px;color:#14148c;"><span class="c" style="text-decoration:underline;">-</span></div><div class="a" style="left:701px;top:171px;width:44px;height:28px;background:#fff;border:1px solid #d0d0d0;border-radius:2px"></div><div class="a l" style="left:705px;top:171px;line-height:28px">шт.</div><div class="a" style="left:729px;top:174px;width:15px;height:15px;border:1px solid #d8d8d8;border-radius:2px;background:#fff"></div><svg class="a" style="left:732px;top:179px" width="9" height="6" viewBox="0 0 9 6"><path d="M0.500 0.500l4 4 4-4" fill="none" stroke="#6a6a6a"/></svg><div class="a" style="left:746px;top:171px;width:44px;height:29px;text-align:center;line-height:28px"><span class="c">796</span></div><div class="a" style="left:791px;top:171px;width:45px;height:29px;text-align:center;line-height:28px"><span class="c">1</span></div><div class="a" style="left:837px;top:171px;width:45px;height:29px;text-align:center;line-height:28px"><span class="c">21.01</span></div><div class="a" style="left:0;top:200px;width:883px;height:28px;background:#cccccc;border-bottom:1px solid #a0a0a0"></div><div class="a" style="left:0;top:200px;width:59px;height:28px;background:#fff;border-bottom:1px solid #e4e4e4"></div><div class="a" style="left:0;top:215px;width:59px;text-align:center"><span class="c">8</span></div><div class="a" style="left:60px;top:200px;width:44px;height:28px;text-align:center;line-height:26px"><span class="c"></span></div><div class="a l" style="left:108px;top:200px;line-height:27px">а) Труба стальная электросварная прямошовная %%c219х6,0мм</div><div class="a" style="left:556px;top:200px;width:144px;height:28px;text-align:center;line-height:27px;color:#14148c;"><span class="c" style="text-decoration:underline;">ГОСТ 10704-91</span></div><div class="a" style="left:701px;top:200px;width:44px;height:27px;background:#fff;border:1px solid #d0d0d0;border-radius:2px"></div><div class="a l" style="left:705px;top:200px;line-height:27px">м.</div><div class="a" style="left:729px;top:203px;width:15px;height:15px;border:1px solid #d8d8d8;border-radius:2px;background:#fff"></div><svg class="a" style="left:732px;top:208px" width="9" height="6" viewBox="0 0 9 6"><path d="M0.500 0.500l4 4 4-4" fill="none" stroke="#6a6a6a"/></svg><div class="a" style="left:746px;top:200px;width:44px;height:28px;text-align:center;line-height:27px"><span class="c">ОО6</span></div><div class="a" style="left:791px;top:200px;width:45px;height:28px;text-align:center;line-height:27px"><span class="c">0,6</span></div><div class="a" style="left:837px;top:200px;width:45px;height:28px;text-align:center;line-height:27px"><span class="c">31,52</span></div><div class="a" style="left:0;top:228px;width:883px;height:28px;background:#ddaaaa;border-bottom:1px solid #a0a0a0"></div><div class="a" style="left:0;top:228px;width:59px;height:28px;background:#fff;border-bottom:1px solid #e4e4e4"></div><div class="a" style="left:0;top:243px;width:59px;text-align:center"><span class="c">9</span></div><div class="a" style="left:60px;top:228px;width:44px;height:28px;text-align:center;line-height:26px"><span class="c"></span></div><div class="a l" style="left:108px;top:228px;line-height:27px">б) Труба стальная электросварная прямошовная %%c89х4,0мм</div><div class="a" style="left:556px;top:228px;width:144px;height:28px;text-align:center;line-height:27px;color:#14148c;"><span class="c" style="text-decoration:underline;">ГОСТ 10704-91</span></div><div class="a" style="left:701px;top:228px;width:44px;height:27px;background:#fff;border:1px solid #d0d0d0;border-radius:2px"></div><div class="a l" style="left:705px;top:228px;line-height:27px">м.</div><div class="a" style="left:729px;top:231px;width:15px;height:15px;border:1px solid #d8d8d8;border-radius:2px;background:#fff"></div><svg class="a" style="left:732px;top:236px" width="9" height="6" viewBox="0 0 9 6"><path d="M0.500 0.500l4 4 4-4" fill="none" stroke="#6a6a6a"/></svg><div class="a" style="left:746px;top:228px;width:44px;height:28px;text-align:center;line-height:27px"><span class="c">ОО6</span></div><div class="a" style="left:791px;top:228px;width:45px;height:28px;text-align:center;line-height:27px"><span class="c">0,25</span></div><div class="a" style="left:837px;top:228px;width:45px;height:28px;text-align:center;line-height:27px"><span class="c">8,38</span></div><div class="a" style="left:0;top:256px;width:883px;height:29px;background:#cc99cc;border-bottom:1px solid #a0a0a0"></div><div class="a" style="left:0;top:256px;width:59px;height:29px;background:#fff;border-bottom:1px solid #e4e4e4"></div><div class="a" style="left:0;top:266px;width:59px;text-align:center"><span class="c">10</span></div><div class="a" style="left:60px;top:256px;width:44px;height:29px;text-align:center;line-height:27px"><span class="c">8</span></div><div class="a l" style="left:108px;top:258px;line-height:12px">Тройник стальной %%c219х6-40х2,5 изготовить из труб указанных ниже, (объем указан на<br>один тройник)</div><div class="a" style="left:556px;top:256px;width:144px;height:29px;text-align:center;line-height:28px;color:#14148c;"><span class="c" style="text-decoration:underline;">-</span></div><div class="a" style="left:701px;top:256px;width:44px;height:28px;background:#fff;border:1px solid #d0d0d0;border-radius:2px"></div><div class="a l" style="left:705px;top:256px;line-height:28px">шт.</div><div class="a" style="left:729px;top:259px;width:15px;height:15px;border:1px solid #d8d8d8;border-radius:2px;background:#fff"></div><svg class="a" style="left:732px;top:264px" width="9" height="6" viewBox="0 0 9 6"><path d="M0.500 0.500l4 4 4-4" fill="none" stroke="#6a6a6a"/></svg><div class="a" style="left:746px;top:256px;width:44px;height:29px;text-align:center;line-height:28px"><span class="c">796</span></div><div class="a" style="left:791px;top:256px;width:45px;height:29px;text-align:center;line-height:28px"><span class="c">1</span></div><div class="a" style="left:837px;top:256px;width:45px;height:29px;text-align:center;line-height:28px"><span class="c">19.49</span></div><div class="a" style="left:0;top:285px;width:883px;height:29px;background:#cccccc;border-bottom:1px solid #a0a0a0"></div><div class="a" style="left:0;top:285px;width:59px;height:29px;background:#fff;border-bottom:1px solid #e4e4e4"></div><div class="a" style="left:0;top:293px;width:59px;text-align:center"><span class="c">11</span></div><div class="a" style="left:60px;top:285px;width:44px;height:29px;text-align:center;line-height:27px"><span class="c"></span></div><div class="a l" style="left:108px;top:285px;line-height:28px">а) Труба стальная электросварная прямошовная %%c219х6,0мм</div><div class="a" style="left:556px;top:285px;width:144px;height:29px;text-align:center;line-height:28px;color:#14148c;"><span class="c" style="text-decoration:underline;">ГОСТ 10704-91</span></div><div class="a" style="left:701px;top:285px;width:44px;height:28px;background:#fff;border:1px solid #d0d0d0;border-radius:2px"></div><div class="a l" style="left:705px;top:285px;line-height:28px">м.</div><div class="a" style="left:729px;top:288px;width:15px;height:15px;border:1px solid #d8d8d8;border-radius:2px;background:#fff"></div><svg class="a" style="left:732px;top:293px" width="9" height="6" viewBox="0 0 9 6"><path d="M0.500 0.500l4 4 4-4" fill="none" stroke="#6a6a6a"/></svg><div class="a" style="left:746px;top:285px;width:44px;height:29px;text-align:center;line-height:28px"><span class="c">ОО6</span></div><div class="a" style="left:791px;top:285px;width:45px;height:29px;text-align:center;line-height:28px"><span class="c">0,6</span></div><div class="a" style="left:837px;top:285px;width:45px;height:29px;text-align:center;line-height:28px"><span class="c">31,52</span></div><div class="a" style="left:0;top:314px;width:883px;height:28px;background:#ddaaaa;border-bottom:1px solid #a0a0a0"></div><div class="a" style="left:0;top:314px;width:59px;height:28px;background:#fff;border-bottom:1px solid #e4e4e4"></div><div class="a" style="left:0;top:322px;width:59px;text-align:center"><span class="c">12</span></div><div class="a" style="left:60px;top:314px;width:44px;height:28px;text-align:center;line-height:26px"><span class="c"></span></div><div class="a l" style="left:108px;top:314px;line-height:27px">б) Труба стальная электросварная прямошовная %%c40х2,5мм</div><div class="a" style="left:556px;top:314px;width:144px;height:28px;text-align:center;line-height:27px;color:#14148c;"><span class="c" style="text-decoration:underline;">ГОСТ 10704-91</span></div><div class="a" style="left:701px;top:314px;width:44px;height:27px;background:#fff;border:1px solid #d0d0d0;border-radius:2px"></div><div class="a l" style="left:705px;top:314px;line-height:27px">м.</div><div class="a" style="left:729px;top:317px;width:15px;height:15px;border:1px solid #d8d8d8;border-radius:2px;background:#fff"></div><svg class="a" style="left:732px;top:322px" width="9" height="6" viewBox="0 0 9 6"><path d="M0.500 0.500l4 4 4-4" fill="none" stroke="#6a6a6a"/></svg><div class="a" style="left:746px;top:314px;width:44px;height:28px;text-align:center;line-height:27px"><span class="c">ОО6</span></div><div class="a" style="left:791px;top:314px;width:45px;height:28px;text-align:center;line-height:27px"><span class="c">0,25</span></div><div class="a" style="left:837px;top:314px;width:45px;height:28px;text-align:center;line-height:27px"><span class="c">2,31</span></div><div class="a" style="left:0;top:342px;width:883px;height:28px;background:#cc99cc;border-bottom:1px solid #a0a0a0"></div><div class="a" style="left:0;top:342px;width:59px;height:28px;background:#fff;border-bottom:1px solid #e4e4e4"></div><div class="a" style="left:0;top:350px;width:59px;text-align:center"><span class="c"></span></div><div class="a" style="left:60px;top:342px;width:44px;height:28px;text-align:center;line-height:26px"><span class="c">9</span></div><div class="a l" style="left:108px;top:344px;line-height:12px">Тройник стальной %%c219х6-219х6 изготовить из труб указанных ниже, (объем указан на<br>один тройник)</div><div class="a" style="left:556px;top:342px;width:144px;height:28px;text-align:center;line-height:27px;color:#14148c;"><span class="c" style="text-decoration:underline;">-</span></div><div class="a" style="left:701px;top:342px;width:44px;height:27px;background:#fff;border:1px solid #d0d0d0;border-radius:2px"></div><div class="a l" style="left:705px;top:342px;line-height:27px">шт.</div><div class="a" style="left:729px;top:345px;width:15px;height:15px;border:1px solid #d8d8d8;border-radius:2px;background:#fff"></div><svg class="a" style="left:732px;top:350px" width="9" height="6" viewBox="0 0 9 6"><path d="M0.500 0.500l4 4 4-4" fill="none" stroke="#6a6a6a"/></svg><div class="a" style="left:746px;top:342px;width:44px;height:28px;text-align:center;line-height:27px"><span class="c">796</span></div><div class="a" style="left:791px;top:342px;width:45px;height:28px;text-align:center;line-height:27px"><span class="c">2</span></div><div class="a" style="left:837px;top:342px;width:45px;height:28px;text-align:center;line-height:27px"><span class="c">28.73</span></div><div class="a" style="left:104px;top:0;width:1px;height:352px;background:#a0a0a0"></div><div class="a" style="left:555px;top:0;width:1px;height:352px;background:#a0a0a0"></div><div class="a" style="left:700px;top:0;width:1px;height:352px;background:#a0a0a0"></div><div class="a" style="left:745px;top:0;width:1px;height:352px;background:#a0a0a0"></div><div class="a" style="left:790px;top:0;width:1px;height:352px;background:#a0a0a0"></div><div class="a" style="left:836px;top:0;width:1px;height:352px;background:#a0a0a0"></div><div class="a" style="left:882px;top:0;width:1px;height:352px;background:#a0a0a0"></div></div><div class="a" style="left:1177px;top:276px;width:15px;height:370px;background:#f0f0f0"></div><div class="a" style="left:1185px;top:291px;width:2px;height:116px;background:#8b8b8b;border-radius:1px"></div></div></body></html>
